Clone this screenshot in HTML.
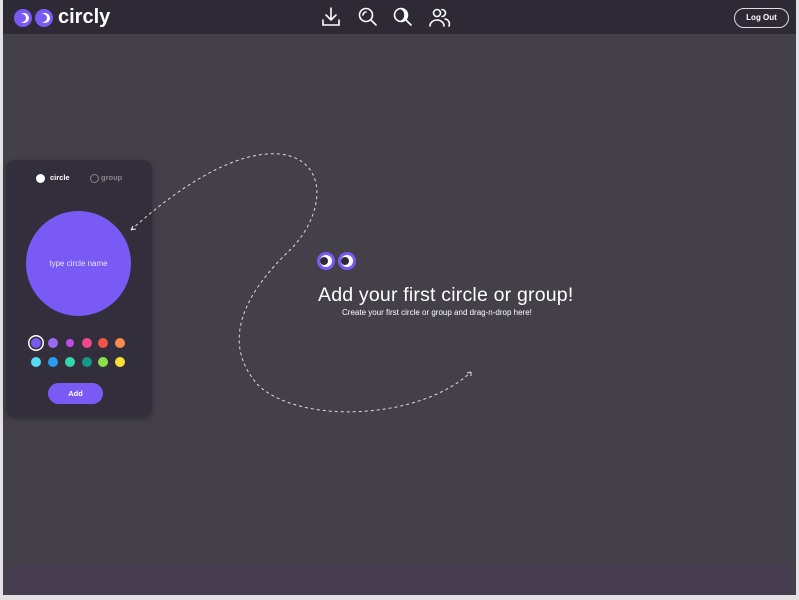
<!DOCTYPE html>
<html><head><style>
body{margin:0;width:799px;height:600px;background:#e2e2e4;position:relative;overflow:hidden;font-family:"Liberation Sans",sans-serif}
#app{position:absolute;left:3px;top:0;width:793px;height:595px;background:#43404a}
#hdr{position:absolute;left:0;top:0;right:0;height:34px;background:#2d2935}
#band{position:absolute;left:0;top:564px;right:0;height:31px;background:#463e4f}
.logo{position:absolute;left:11px;top:8px}
.brand{position:absolute;left:55px;top:6px;color:#fff;font-weight:bold;font-size:20px}
.lo{position:absolute;left:731px;top:8px;width:53px;height:18px;border:1px solid #ddd;border-radius:10px;color:#fff;font-size:8px;text-align:center;line-height:18px;font-weight:bold}
#panel{position:absolute;left:3px;top:160px;width:146px;height:257px;background:#332e3b;border-radius:9px;box-shadow:0 2px 6px rgba(0,0,0,.3)}
.big{position:absolute;left:20px;top:51px;width:105px;height:105px;border-radius:50%;background:#7a5af5;color:#e8e4ff;font-size:8px;text-align:center;line-height:105px}
.d{position:absolute;width:10px;height:10px;border-radius:50%}
.add{position:absolute;left:42px;top:223px;width:55px;height:21px;border-radius:11px;background:#7a5af5;color:#fff;font-size:7.5px;font-weight:bold;text-align:center;line-height:21px}
h1{position:absolute;left:315px;top:284px;margin:0;color:#fff;font-weight:normal;font-size:19.5px;letter-spacing:0.2px;white-space:nowrap}
.sub{position:absolute;left:339px;top:308px;color:#fff;font-size:8px;white-space:nowrap}
</style></head><body>
<div id="app">
<div id="hdr">
<svg class="logo" width="40" height="20"><circle cx="9" cy="10" r="9" fill="#7a5af5"/><circle cx="10" cy="10" r="5" fill="#fff"/><circle cx="8" cy="10" r="4" fill="#7a5af5"/><circle cx="30" cy="10" r="9" fill="#7a5af5"/><circle cx="31" cy="10" r="5" fill="#fff"/><circle cx="29" cy="10" r="4" fill="#7a5af5"/></svg>
<div class="brand">circly</div>
<svg style="position:absolute;left:318px;top:6px" width="130" height="22" fill="none" stroke="#fff" stroke-width="1.6" stroke-linecap="round">
<path d="M10 2v12M5 9l5 5 5-5M2 14v5h16v-5"/>
<circle cx="45" cy="9" r="6.5"/><path d="M50 14l5 5M42 9a3 3 0 0 1 3-3"/>
<circle cx="80" cy="9" r="6.5"/><path d="M85 14l5 5"/><path d="M80 3a6 6 0 0 1 0 12a4 6 0 0 0 0-12z" fill="#fff"/>
<circle cx="116" cy="7" r="3.5"/><path d="M109 20a7 6 0 0 1 14 0M121 3.5a3.5 3.5 0 0 1 0 7M124 13a5 5 0 0 1 4 7"/>
</svg>
<div class="lo">Log Out</div>
</div>
<div id="band"></div>
<h1>Add your first circle or group!</h1>
<div class="sub">Create your first circle or group and drag-n-drop here!</div>
<div id="panel">
<div style="position:absolute;left:30px;top:14px;width:9px;height:9px;border-radius:50%;background:#fff"></div>
<div style="position:absolute;left:44px;top:13px;color:#fff;font-size:7.5px;font-weight:bold">circle</div>
<div style="position:absolute;left:84px;top:14px;width:7px;height:7px;border-radius:50%;border:1px solid #888"></div>
<div style="position:absolute;left:95px;top:13px;color:#888;font-size:7.5px;font-weight:bold">group</div>
<div class="big">type circle name</div>
<div class="d" style="left:25px;top:178px;width:10px;height:10px;background:#7a5af5;box-shadow:0 0 0 1.5px #332e3b,0 0 0 3px #fff"></div>
<div class="d" style="left:42px;top:178px;background:#9a6af5"></div>
<div class="d" style="left:60px;top:179px;width:8px;height:8px;background:#c44ae8"></div>
<div class="d" style="left:76px;top:178px;background:#f0488e"></div>
<div class="d" style="left:92px;top:178px;background:#f25546"></div>
<div class="d" style="left:109px;top:178px;background:#fb8c50"></div>
<div class="d" style="left:25px;top:197px;background:#56dcf5"></div>
<div class="d" style="left:42px;top:197px;background:#2c9cf2"></div>
<div class="d" style="left:59px;top:197px;background:#2fd9a8"></div>
<div class="d" style="left:76px;top:197px;background:#119a85"></div>
<div class="d" style="left:92px;top:197px;background:#8ae04a"></div>
<div class="d" style="left:109px;top:197px;background:#fbe036"></div>
<div class="add">Add</div>
</div>
<svg style="position:absolute;left:-3px;top:0" width="796" height="564" fill="none">
<path d="M131 230C170 195 230 150 280 154C330 160 325 215 290 250C248 290 218 340 258 385C300 425 420 420 471 372" stroke="#ddd" stroke-width="1" stroke-dasharray="3 3"/>
<path d="M131 230l5-1M131 230l2-4M471 372l-4 1M471 372l0 4" stroke="#ddd" stroke-width="1"/>
<circle cx="326" cy="261" r="9" fill="#7a5af5"/><circle cx="326" cy="261" r="6" fill="#fff"/><circle cx="324" cy="261" r="4" fill="#2d2935"/>
<circle cx="347" cy="261" r="9" fill="#7a5af5"/><circle cx="347" cy="261" r="6" fill="#fff"/><circle cx="345" cy="261" r="4" fill="#2d2935"/>
</svg>
</div>
</body></html>
